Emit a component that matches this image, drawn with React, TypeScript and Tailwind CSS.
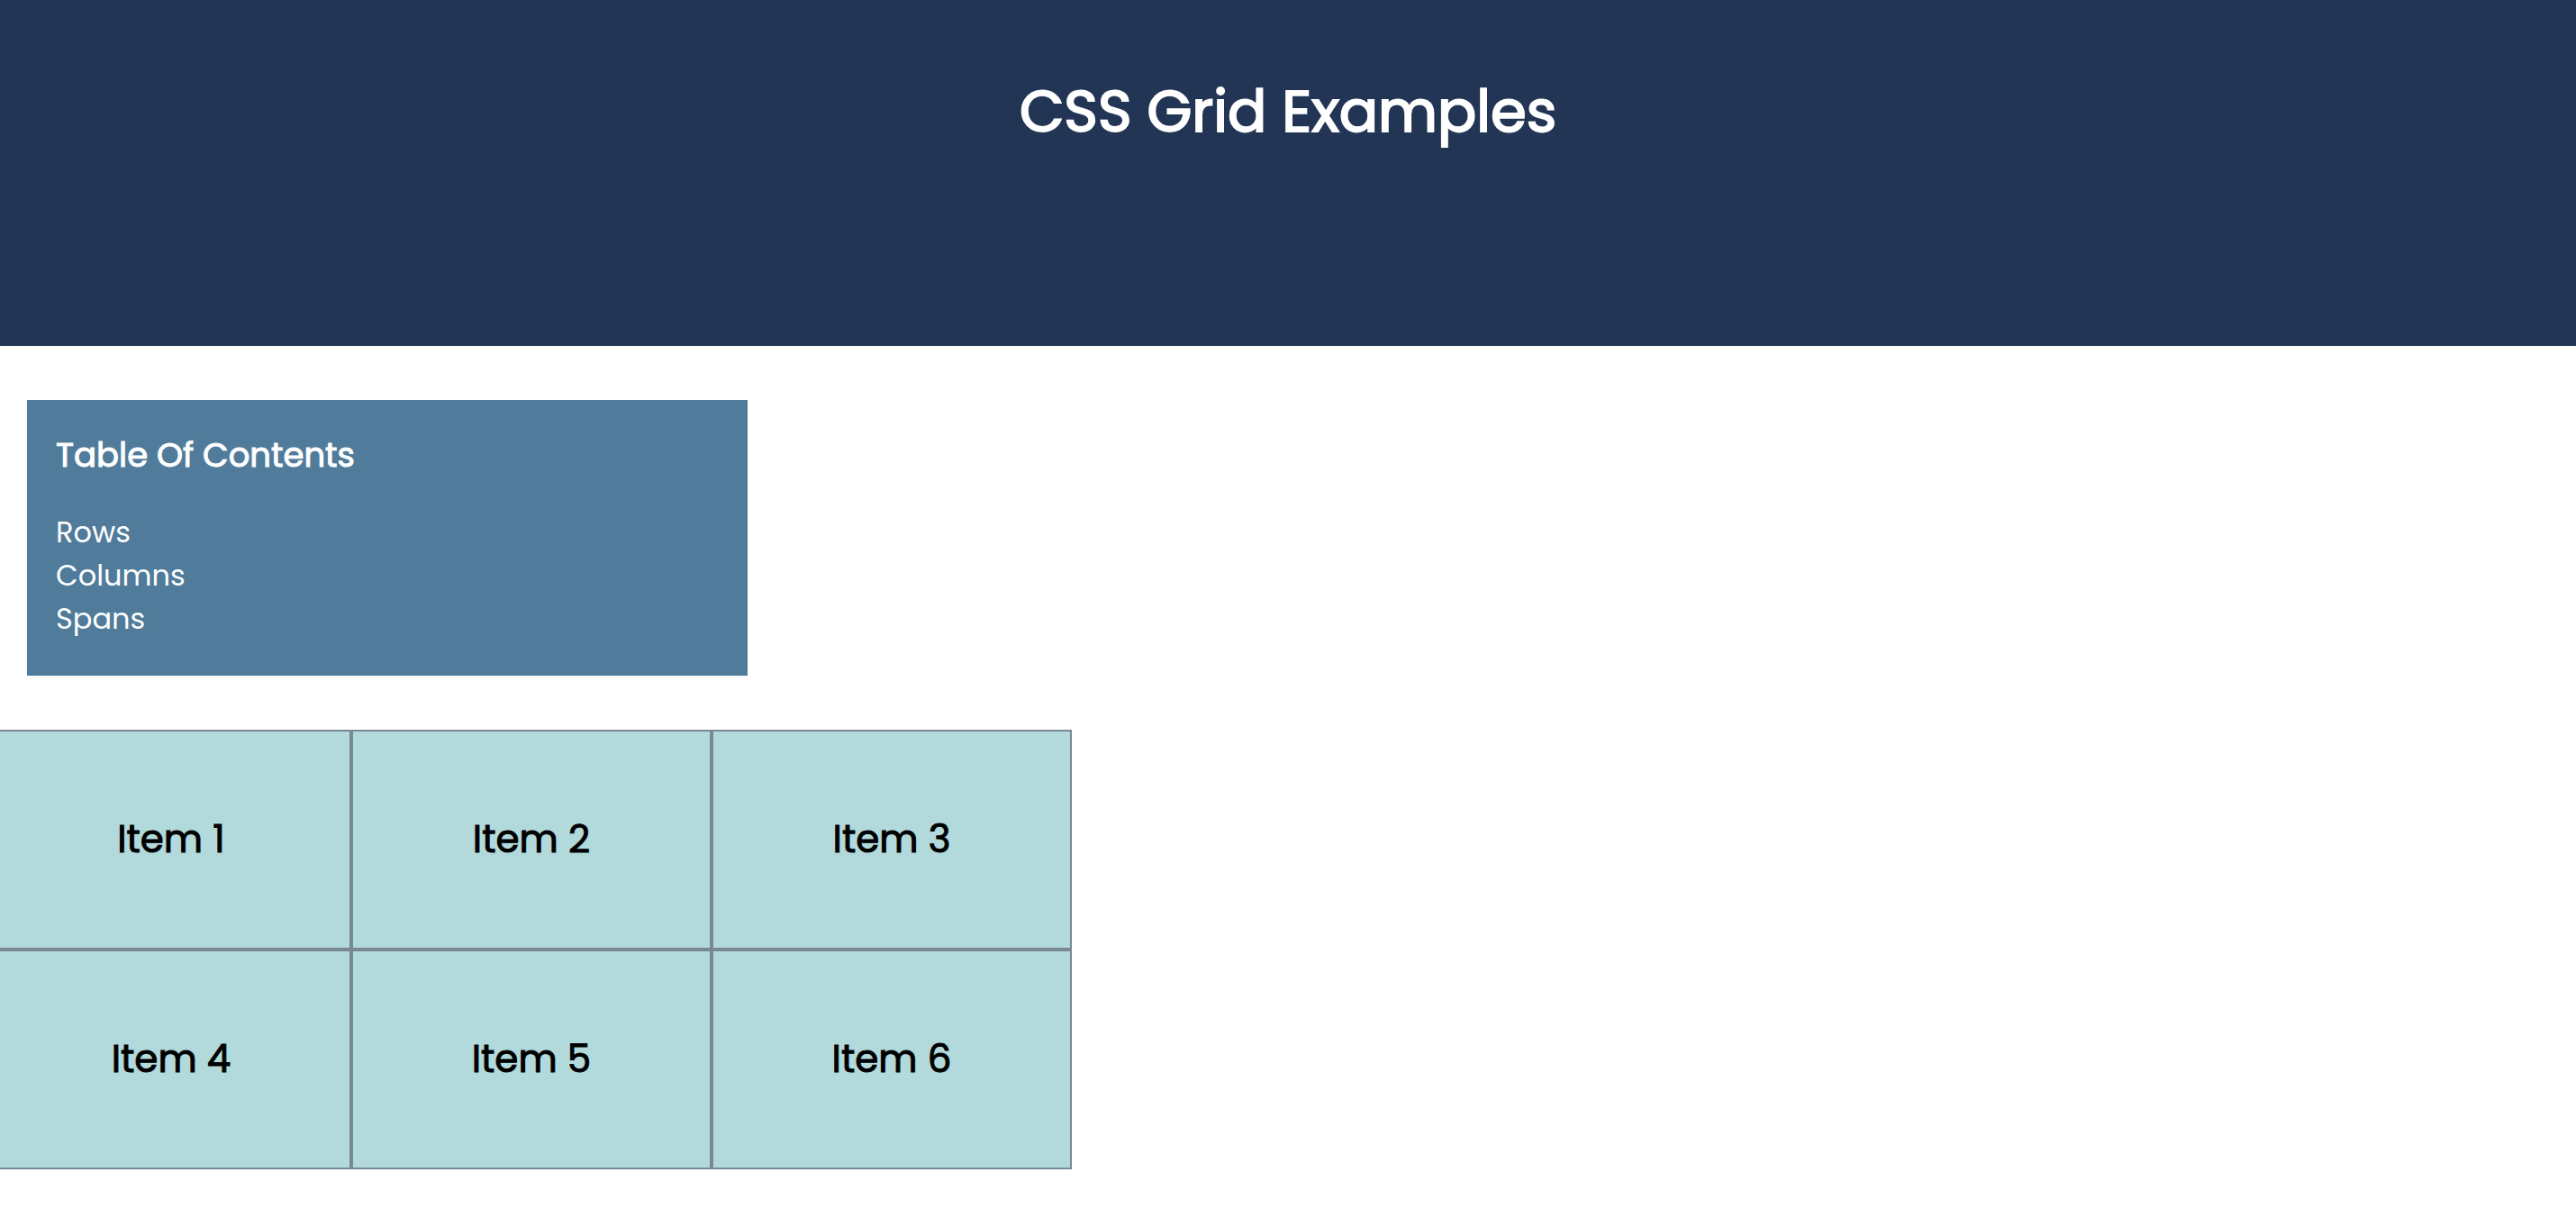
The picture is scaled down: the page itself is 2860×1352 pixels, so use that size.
const links = ["Rows", "Columns", "Spans"];
const items = ["Item 1", "Item 2", "Item 3", "Item 4", "Item 5", "Item 6"];

export default function App() {
  return (
    <div className="min-h-screen overflow-x-hidden bg-white font-['Poppins','Inter',sans-serif]">
      <header className="bg-[#223554] px-8 pt-[76px] pb-[212px] text-center">
        <h1 className="text-[64px] leading-[96px] font-normal text-white [-webkit-text-stroke:2px_currentColor]">
          CSS Grid Examples
        </h1>
      </header>

      <nav
        aria-labelledby="toc-title"
        className="mx-[30px] my-[60px] max-w-[800px] bg-[#507b9b] px-8 pt-8 pb-[39px] text-white"
      >
        <h2
          id="toc-title"
          className="mb-[33px] text-[37px] leading-[58px] font-normal [-webkit-text-stroke:1px_currentColor]"
        >
          Table Of Contents
        </h2>
        <ul className="text-[32px] leading-[48px]">
          {links.map((label) => (
            <li key={label}>
              <a href={`#${label.toLowerCase()}`}>{label}</a>
            </li>
          ))}
        </ul>
      </nav>

      <main className="-ml-[10px] grid max-w-[1200px] grid-cols-3">
        {items.map((label) => (
          <div
            key={label}
            className="flex items-center justify-center border-2 border-[#7a8797] bg-[#b2d9db] py-[90px]"
          >
            <h3 className="text-[42px] leading-[60px] font-normal text-black [-webkit-text-stroke:1px_currentColor]">
              {label}
            </h3>
          </div>
        ))}
      </main>
    </div>
  );
}
